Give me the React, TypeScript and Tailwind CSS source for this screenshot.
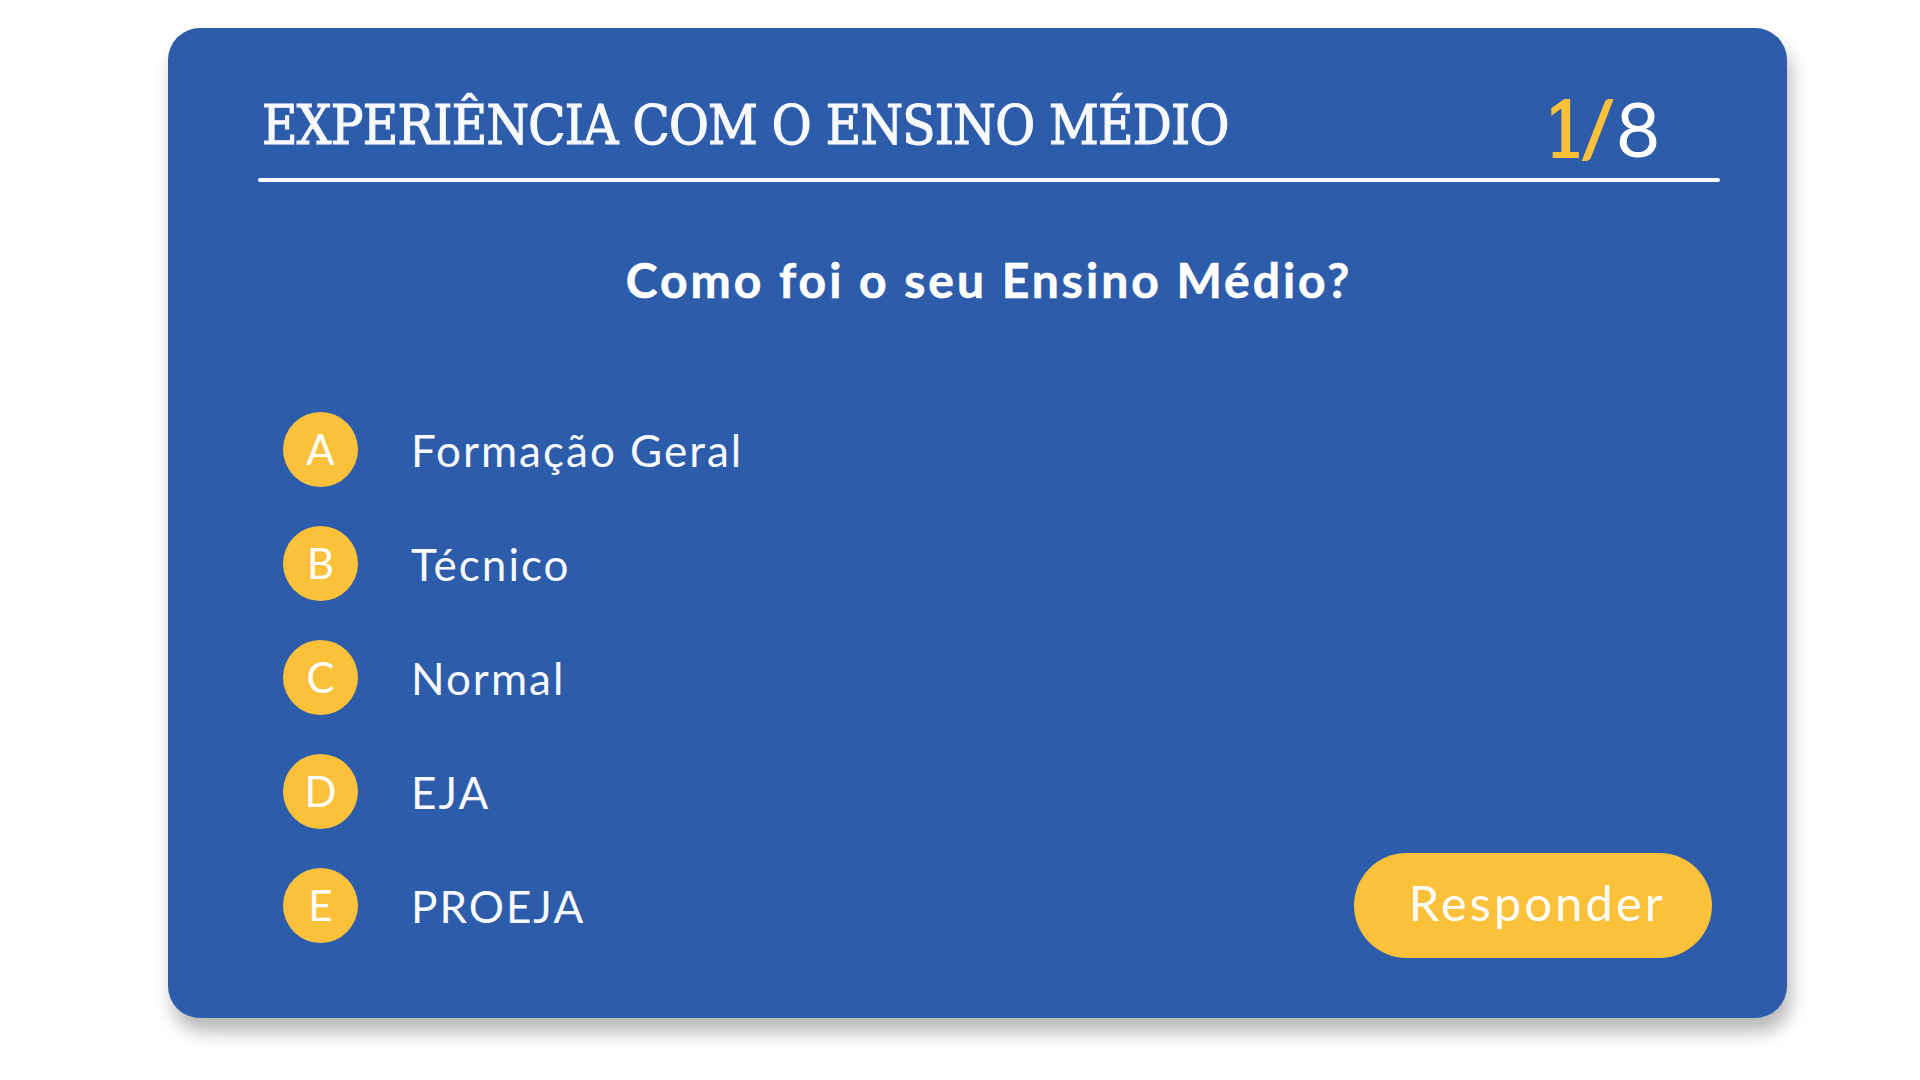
const options = [
  { letter: "A", label: "Formação Geral" },
  { letter: "B", label: "Técnico" },
  { letter: "C", label: "Normal" },
  { letter: "D", label: "EJA" },
  { letter: "E", label: "PROEJA" },
];

function OptionRow({ letter, label }: { letter: string; label: string }) {
  return (
    <li className="flex h-[75px] items-center">
      <span className="flex h-[75px] w-[75px] items-center justify-center rounded-full bg-[#fcc13b] pb-[2px] font-['Lato',sans-serif] text-[42px] leading-none text-white">
        {letter}
      </span>
      <span className="ml-[53px] font-['Lato',sans-serif] text-[44px] leading-none tracking-[2px] text-[#f7f9fd]">
        {label}
      </span>
    </li>
  );
}

export default function App() {
  return (
    <main className="min-h-screen bg-white pl-[168px] pt-[28px]">
      <section className="flex h-[990px] w-[1619px] flex-col rounded-[32px] bg-[#2c5caa] pl-[90px] pr-[67px] pt-[60px] shadow-[4px_14px_18px_rgba(0,0,0,0.28)]">
        <header className="flex items-end justify-between">
          <h1 className="mb-[16px] pl-[4px] font-['DejaVu_Serif_Condensed','DejaVu_Serif',serif] text-[54px] leading-none tracking-[-0.7px] text-[#f7f9fd] font-stretch-condensed [-webkit-text-stroke:1.2px_#f7f9fd]">
            EXPERIÊNCIA COM O ENSINO MÉDIO
          </h1>
          <div className="mr-[60px] flex items-baseline leading-none">
            <span className="font-['DejaVu_Serif_Condensed','DejaVu_Serif',serif] text-[76px] tracking-[-20px] text-[#fcc13b] font-stretch-condensed [-webkit-text-stroke:2px_#fcc13b]">
              1
            </span>
            <span className="ml-[12px] font-['Lato',sans-serif] text-[78px] font-bold tracking-[-4px] text-[#fcc13b]">/</span>
            <span className="ml-[4px] font-['Lato',sans-serif] text-[76px] text-white">8</span>
          </div>
        </header>
        <div className="mt-[9px] h-[4px] rounded-full bg-[#f7f9fd]" />

        <h2 className="mt-[74px] text-center font-['Lato',sans-serif] text-[48px] font-bold leading-none tracking-[3px] text-white [-webkit-text-stroke:0.6px_white]">
          Como foi o seu Ensino Médio?
        </h2>

        <div className="mt-[108px] flex items-end justify-between pl-[25px]">
          <ul className="flex flex-col gap-[39px]">
            {options.map((o) => (
              <OptionRow key={o.letter} letter={o.letter} label={o.label} />
            ))}
          </ul>
          <button className="mr-[8px] -mb-[15px] flex h-[105px] w-[358px] items-center justify-center rounded-full bg-[#fcc13b] pb-[6px] pl-[8px] font-['Lato',sans-serif] text-[49px] leading-none tracking-[3px] text-white">
            Responder
          </button>
        </div>
      </section>
    </main>
  );
}
